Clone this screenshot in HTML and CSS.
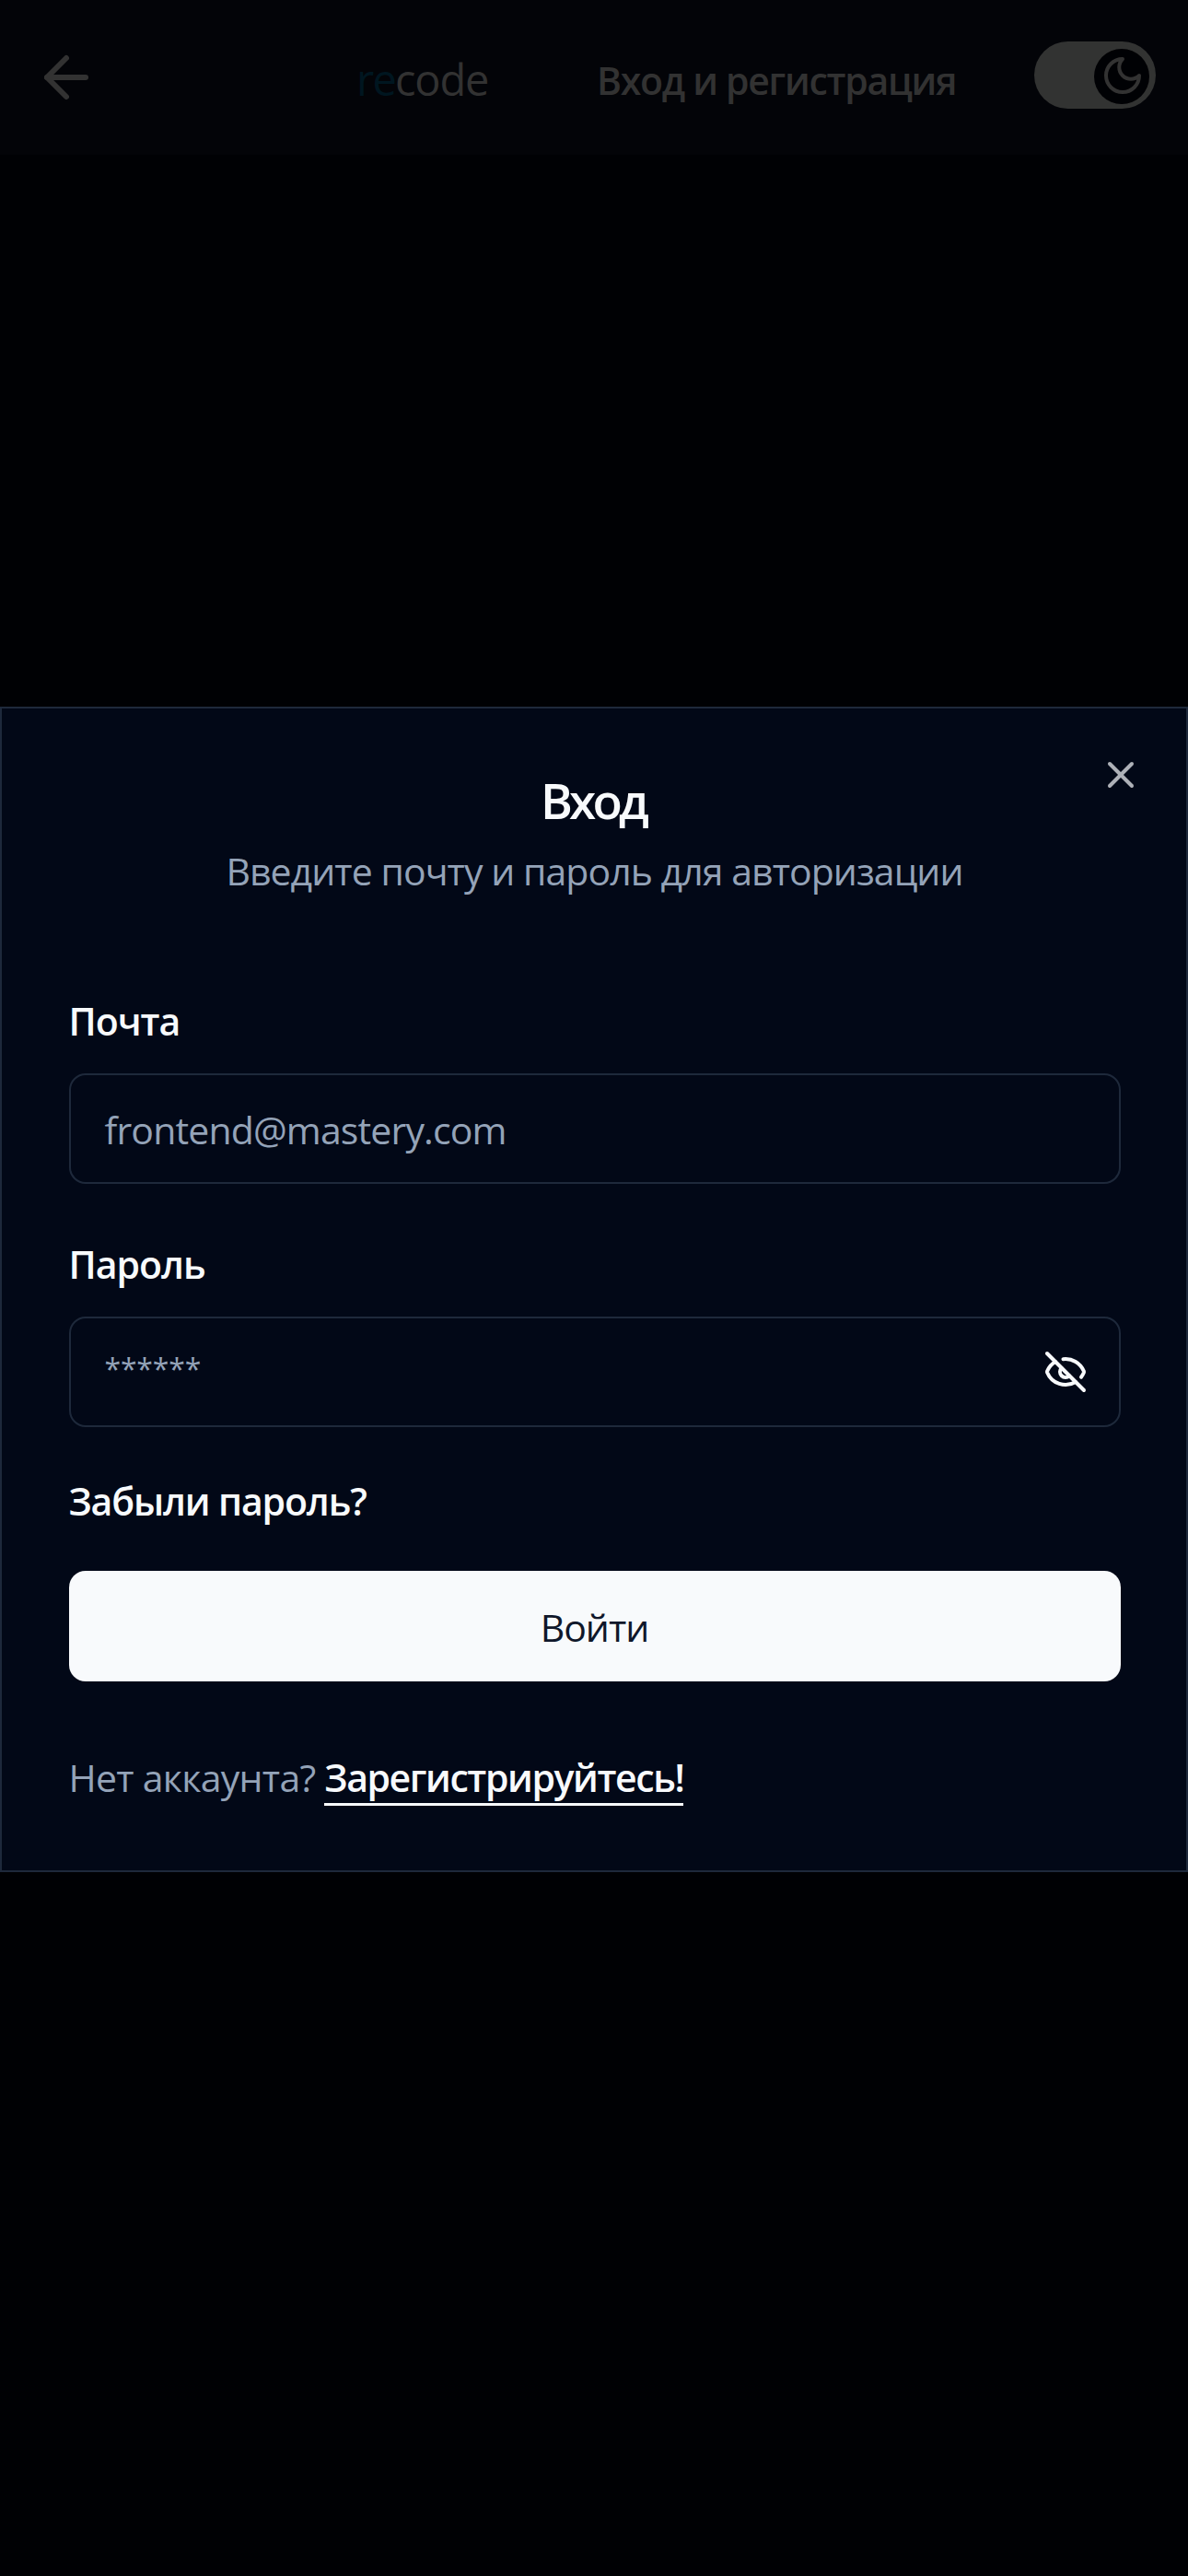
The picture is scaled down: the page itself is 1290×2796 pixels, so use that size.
FILE: index.html
```html
<!DOCTYPE html>
<html lang="ru">
<head>
<meta charset="utf-8">
<title>Вход</title>
<link rel="stylesheet" href="styles.css">
</head>
<body>
<header class="topbar">
  <svg class="icon back" viewBox="0 0 24 24"><path d="m12 19-7-7 7-7"/><path d="M19 12H5"/></svg>
  <div class="logo"><span class="re">re</span>code</div>
  <h1 class="page-title">Вход и регистрация</h1>
  <div class="switch"><div class="thumb"><svg class="icon moon" viewBox="0 0 24 24"><path d="M12 3a6 6 0 0 0 9 9 9 9 0 1 1-9-9Z"/></svg></div></div>
</header>
<main class="dialog">
  <svg class="icon close" viewBox="0 0 24 24"><path d="M18 6 6 18"/><path d="m6 6 12 12"/></svg>
  <h2 class="title">Вход</h2>
  <p class="desc">Введите почту и пароль для авторизации</p>
  <form class="form">
    <label class="label">Почта</label>
    <div class="field"><span class="placeholder">frontend@mastery.com</span></div>
    <label class="label second">Пароль</label>
    <div class="field"><span class="stars">******</span>
      <svg class="icon eye" viewBox="0 0 24 24"><path d="M10.733 5.076a10.744 10.744 0 0 1 11.205 6.575 1 1 0 0 1 0 .696 10.747 10.747 0 0 1-1.444 2.49"/><path d="M14.084 14.158a3 3 0 0 1-4.242-4.242"/><path d="M17.479 17.499a10.75 10.75 0 0 1-15.417-5.151 1 1 0 0 1 0-.696 10.75 10.75 0 0 1 4.446-5.143"/><path d="m2 2 20 20"/></svg>
    </div>
    <a class="forgot">Забыли пароль?</a>
    <button class="submit" type="button">Войти</button>
    <p class="signup">Нет аккаунта? <a class="link">Зарегистрируйтесь!</a></p>
  </form>
</main>
</body>
</html>
```
FILE: styles.css
```css
* { box-sizing: border-box; margin: 0; }
body { background: #000104; color: #f8fafc; font: 400 41px/60px "Open Sans", "Noto Sans", sans-serif; letter-spacing: -0.85px; min-height: 2796px; }
.icon { display: block; fill: none; stroke: currentColor; stroke-width: 2; stroke-linecap: round; stroke-linejoin: round; }
.topbar { display: flex; align-items: flex-start; height: 168px; background: #030408; color: #323232; }
.back { width: 72px; height: 72px; margin: 48px 0 0 36px; }
.logo { margin: 50px 0 0 279px; width: 145px; font-size: 47px; line-height: 72px; letter-spacing: -1.2px; white-space: nowrap; }
.re { color: #001620; letter-spacing: -1.8px; }
.page-title { margin: 57px 0 0 116px; width: 389px; font-size: 41px; font-weight: 600; line-height: 60px; letter-spacing: -1.3px; white-space: nowrap; }
.switch { margin: 45px 0 0 86px; width: 132px; height: 73px; padding: 7.5px 7px 0 65px; border-radius: 37px; background: #323332; }
.thumb { display: flex; width: 60px; height: 60px; padding: 5px 0 0 7px; border-radius: 50%; background: #000104; }
.moon { width: 48px; height: 48px; }
.dialog { position: relative; height: 1265px; margin-top: 599px; padding: 70px 71.5px 0 72.5px; border: 2px solid #1e293b; background: #020817; }
.close { position: absolute; right: 47px; top: 48px; width: 48px; height: 48px; color: #aeb1b8; }
.title { padding-right: 3px; font-size: 53px; font-weight: 600; line-height: 60px; letter-spacing: -3.8px; text-align: center; }
.desc { margin-top: 16px; letter-spacing: -0.95px; text-align: center; color: #94a3b8; }
.form { margin-top: 103px; }
.label, .forgot { display: block; font-weight: 600; }
.label { letter-spacing: -1px; }
.field { display: flex; align-items: center; justify-content: space-between; height: 120px; margin-top: 27px; padding: 0 34px 0 37px; border: 2px solid #1e293b; border-radius: 18px; color: #94a3b8; }
.placeholder { padding-top: 1px; }
.stars { padding-bottom: 7px; font-size: 32px; letter-spacing: -0.2px; }
.second { margin-top: 57px; }
.eye { width: 48px; height: 48px; color: #f8fafc; }
.forgot { margin-top: 50px; letter-spacing: -1.15px; }
.submit { display: block; width: 100%; height: 120px; margin-top: 46px; padding: 2px 0 0; border: 0; border-radius: 18px; background: #f8fafc; color: #0f172a; font: inherit; font-weight: 500; letter-spacing: -1px; }
.signup { margin-top: 74px; letter-spacing: -0.73px; color: #94a3b8; }
.link { color: #f8fafc; font-weight: 600; letter-spacing: -1.42px; border-bottom: 3px solid #f8fafc; }
```
